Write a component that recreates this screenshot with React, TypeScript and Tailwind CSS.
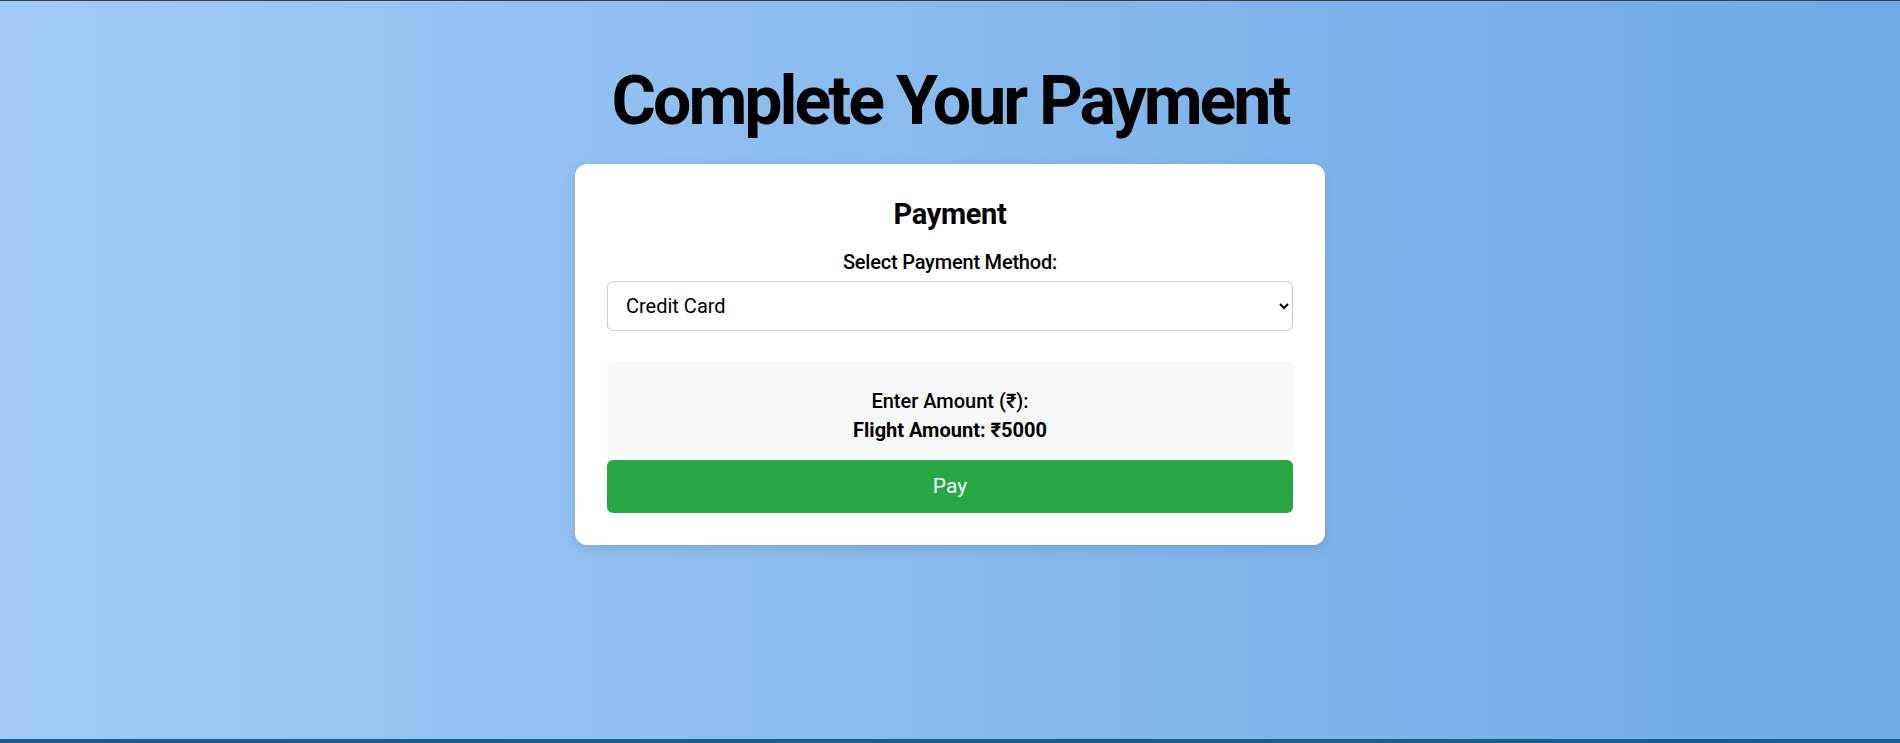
import React, { useState } from 'react';

const App: React.FC = () => {
  const [method, setMethod] = useState('Credit Card');

  return (
    <div className="min-h-screen flex flex-col bg-gradient-to-r from-[#a1cbf4] to-[#6eaae8] font-['Roboto',sans-serif] text-black">
      <div className="h-px bg-[#3c3c3c]" />
      <main className="flex-1 flex flex-col items-center pt-[62px]">
        <h1 className="text-[68px] leading-[76px] font-bold tracking-[-3px]">Complete Your Payment</h1>

        {/* Card */}
        <div className="mt-[25px] w-[750px] bg-white rounded-xl shadow-[0_4px_12px_rgba(0,0,0,0.12)] p-8 pt-[32px]">
          <h2 className="text-center text-[29px] leading-[36px] font-bold tracking-[-0.3px]">Payment</h2>

          <label className="block text-center text-[20px] leading-[26px] font-medium tracking-[-0.2px] mt-[17px] mb-[6px]">
            Select Payment Method:
          </label>
          <select
            value={method}
            onChange={e => setMethod(e.target.value)}
            className="w-full h-[50px] px-[14px] text-[20px] bg-white border border-[#cccccc] rounded-[6px] outline-none"
          >
            <option>Credit Card</option>
            <option>Debit Card</option>
            <option>UPI</option>
            <option>Net Banking</option>
          </select>

          {/* Amount */}
          <div className="mt-[31px] bg-[#f7f8fa] rounded-[4px] h-[94px] flex flex-col items-center justify-center pt-[13px] text-[20px] leading-[29px]">
            <p className="font-medium">Enter Amount (₹):</p>
            <p className="font-bold">Flight Amount: ₹5000</p>
          </div>

          <button className="mt-[4px] w-full h-[53px] bg-[#28a745] hover:bg-[#218838] text-white text-[21px] rounded-[6px]">
            Pay
          </button>
        </div>
      </main>
      <div className="h-[4px] bg-[#1a5d8f]" />
    </div>
  );
};

export default App;
